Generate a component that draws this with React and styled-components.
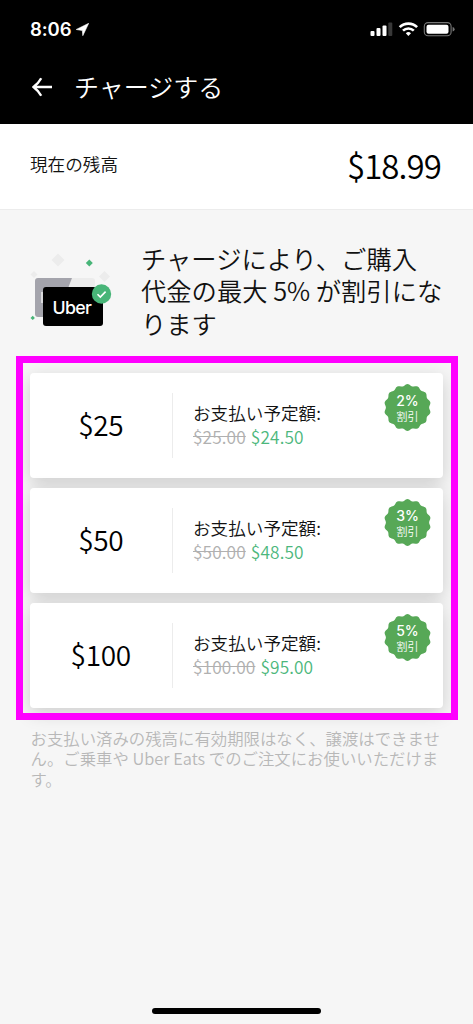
import React from "react";
import styled, { createGlobalStyle } from "styled-components";

const jp = '"Noto Sans CJK JP", sans-serif';

const GlobalStyle = createGlobalStyle`
  * { box-sizing: border-box; }
  body { margin: 0; background: #f6f6f6; font-family: ${jp}; font-weight: 350; color: #111; }
  p, h1, h2 { margin: 0; font-weight: 350; }
`;

const Screen = styled.div`
  position: relative;
  width: 473px;
  height: 1024px;
  overflow: hidden;
  display: flex;
  flex-direction: column;
  background: #f6f6f6;
`;

const Header = styled.header`
  height: 124px;
  flex: none;
  background: #000;
  color: #fff;
`;

const StatusBar = styled.div`
  height: 58px;
  padding: 0 17px 0 30px;
  display: flex;
  align-items: center;
  justify-content: space-between;
`;

const Clock = styled.div`
  display: flex;
  align-items: center;
  gap: 5px;
  font: 600 18.5px/24px Inter, sans-serif;
  letter-spacing: -0.1px;
`;

const StatusIcons = styled.div`
  display: flex;
  align-items: center;
  svg { display: block; }
`;

const NavBar = styled.div`
  height: 57px;
  padding-left: 32px;
  display: flex;
  align-items: center;
  gap: 22px;
`;

const Title = styled.h1`
  padding-bottom: 2px;
  font: 350 25px/36px ${jp};
  white-space: nowrap;
`;

const BalanceRow = styled.section`
  height: 86px;
  flex: none;
  padding: 0 32px 4px 30px;
  display: flex;
  align-items: center;
  justify-content: space-between;
  background: #fff;
  border-bottom: 1px solid #ececec;
`;

const BalanceLabel = styled.span`
  padding-bottom: 1px;
  font: 350 17.6px/24px ${jp};
`;

const Balance = styled.span`
  font: 350 33px/40px ${jp};
  letter-spacing: -0.9px;
  color: #000;
`;

const Hero = styled.section`
  height: 146px;
  flex: none;
  padding: 32px 0 0 24px;
  display: flex;
`;

const HeroArt = styled.svg`
  width: 117px;
  height: 100px;
  flex: none;
`;

const HeroText = styled.h2`
  font: 350 25.3px/32.4px ${jp};
  white-space: nowrap;
`;

const Line = styled.span`
  display: block;
`;

const Offers = styled.section`
  position: relative;
  height: 364px;
  flex: none;
  margin: 0 15.5px 0 16px;
  padding: 16.5px 14.5px 0 14px;
  display: flex;
  flex-direction: column;
  gap: 10.2px;
  &::after {
    content: "";
    position: absolute;
    inset: 0;
    border: 7px solid #ff00ff;
    pointer-events: none;
  }
`;

const Card = styled.article`
  height: 105px;
  flex: none;
  display: flex;
  align-items: center;
  background: #fff;
  border-radius: 4px;
  box-shadow: 0 5px 18px rgba(0, 0, 0, 0.17);
`;

const Amount = styled.div`
  width: 142.5px;
  height: 65px;
  flex: none;
  padding-bottom: 2px;
  display: flex;
  align-items: center;
  justify-content: center;
  border-right: 1px solid #ececec;
  font-size: 28px;
  letter-spacing: -0.3px;
  color: #000;
`;

const Payment = styled.div`
  flex: 1;
  padding: 0 0 1px 20.5px;
  white-space: nowrap;
`;

const PaymentLabel = styled.p`
  font: 350 17.6px/24px ${jp};
`;

const Prices = styled.p`
  display: flex;
  gap: 5px;
  font: 350 17.3px/23px ${jp};
  letter-spacing: 0.12px;
  color: #4cb77c;
`;

const OldPrice = styled.s`
  color: #b0b0b0;
`;

const Badge = styled.div`
  position: relative;
  align-self: flex-start;
  width: 48px;
  height: 48px;
  margin: 11px 11.5px 0 0;
  display: flex;
  flex-direction: column;
  align-items: center;
  justify-content: center;
  color: #fff;
`;

const BadgeShape = styled.svg`
  position: absolute;
  inset: 0;
`;

const BadgeRate = styled.span`
  position: relative;
  font: 500 14px/16px Inter, sans-serif;
`;

const BadgeText = styled.span`
  position: relative;
  font: 350 11px/14px ${jp};
`;

const Footnote = styled.p`
  padding: 8px 0 0 30.5px;
  font: 350 16.4px/20.4px ${jp};
  color: #b8b8b8;
  white-space: nowrap;
`;

const HomeIndicator = styled.div`
  width: 169px;
  height: 6.5px;
  margin: auto auto 10px 152px;
  border-radius: 4px;
  background: #000;
`;

const scallop = Array.from({ length: 169 }, (_, i) => {
  const a = (i / 168) * Math.PI * 2;
  const r = 22.5 + 0.9 * Math.cos(14 * a);
  return `${i ? "L" : "M"}${(23.5 + r * Math.sin(a)).toFixed(2)} ${(23.5 - r * Math.cos(a)).toFixed(2)}`;
}).join("") + "Z";

const offers = [
  { amount: "$25", was: "$25.00", now: "$24.50", rate: "2%" },
  { amount: "$50", was: "$50.00", now: "$48.50", rate: "3%" },
  { amount: "$100", was: "$100.00", now: "$95.00", rate: "5%" },
];

function CardsArt() {
  return (
    <HeroArt viewBox="0 0 117 100">
      <g fill="#ececec">
        <path d="M34 11.500l6.500 6.500-6.500 6.500-6.500-6.500z" />
        <path d="M10 29l3.500 3.500-3.500 3.500-3.500-3.500z" />
        <path d="M80.500 29l5.500 5.500-5.500 5.500-5.500-5.500z" />
        <rect x="12" y="36" width="59" height="39" rx="3" />
      </g>
      <path d="M14 36h34L33 75H14q-3 0-3-3V39q0-3 3-3z" fill="#a4a4ac" />
      <rect x="17" y="50" width="3" height="11" fill="#dadadd" />
      <path d="M65.300 17.500l3.500 3.500-3.500 3.500-3.500-3.500z" fill="#48b578" />
      <path d="M8.700 73.700l2.200 2.200-2.200 2.200-2.200-2.200z" fill="#48b578" />
      <rect x="19" y="45" width="60" height="39" rx="3" />
      <text x="28.500" y="71.500" fill="#fff" fontFamily="Inter" fontSize="17.800" fontWeight="500" textLength="39.500">Uber</text>
      <circle cx="77.500" cy="52" r="9.700" fill="#48b578" />
      <path d="M73.500 52.300l2.800 2.800 5.300-5.500" fill="none" stroke="#fff" strokeWidth="1.600" />
    </HeroArt>
  );
}

export default function App() {
  return (
    <Screen>
      <GlobalStyle />
      <Header>
        <StatusBar>
          <Clock>
            8:06
            <svg width="13" height="13" viewBox="0 0 13 13" fill="#fff">
              <path d="M12.700.300L6.800 12.700 6.300 7.500.200 6.500z" stroke="#fff" strokeWidth=".6" strokeLinejoin="round" />
            </svg>
          </Clock>
          <StatusIcons>
            <svg width="86" height="18" viewBox="0 0 86 18">
              <g fill="#fff">
                <rect x="0.500" y="11" width="4" height="5" rx="1" />
                <rect x="6.500" y="8" width="4" height="8" rx="1" />
                <rect x="12.500" y="5.500" width="4" height="10.500" rx="1" />
                <rect x="18.300" y="2.500" width="4" height="13.500" rx="1" opacity=".22" />
              </g>
              <g fill="none" stroke="#fff" strokeWidth="2.600">
                <path d="M29.700 7.200a12.300 12.300 0 0 1 17.400 0" />
                <path d="M33 10.700a7.600 7.600 0 0 1 10.800 0" />
              </g>
              <path d="M38.400 16l-2.600-2.700a3.700 3.700 0 0 1 5.200 0z" fill="#fff" />
              <rect x="54.300" y="2.600" width="26.800" height="13.200" rx="3.800" fill="none" stroke="#777" strokeWidth="1.100" />
              <rect x="56.500" y="4.700" width="22" height="9" rx="2" fill="#fff" />
              <path d="M82.600 7q2 .500 2 2.200t-2 2.200z" fill="#777" />
            </svg>
          </StatusIcons>
        </StatusBar>
        <NavBar>
          <svg width="20" height="20" viewBox="0 0 20 20" fill="none" stroke="#fff" strokeWidth="2.400">
            <path d="M20 10H2M9.200 1.200Q6.500 6.200 1.500 10Q6.500 13.800 9.200 18.800" />
          </svg>
          <Title>チャージする</Title>
        </NavBar>
      </Header>
      <BalanceRow>
        <BalanceLabel>現在の残高</BalanceLabel>
        <Balance>$18.99</Balance>
      </BalanceRow>
      <Hero>
        <CardsArt />
        <HeroText>
          <Line>チャージにより、ご購入</Line>
          <Line>代金の最大 5% が割引にな</Line>
          <Line>ります</Line>
        </HeroText>
      </Hero>
      <Offers>
        {offers.map((o) => (
          <Card key={o.amount}>
            <Amount>{o.amount}</Amount>
            <Payment>
              <PaymentLabel>お支払い予定額:</PaymentLabel>
              <Prices>
                <OldPrice>{o.was}</OldPrice>
                <span>{o.now}</span>
              </Prices>
            </Payment>
            <Badge>
              <BadgeShape viewBox="0 0 48 48">
                <path d={scallop} fill="#57a857" />
              </BadgeShape>
              <BadgeRate>{o.rate}</BadgeRate>
              <BadgeText>割引</BadgeText>
            </Badge>
          </Card>
        ))}
      </Offers>
      <Footnote>
        <Line>お支払い済みの残高に有効期限はなく、譲渡はできませ</Line>
        <Line>ん。ご乗車や Uber Eats でのご注文にお使いいただけま</Line>
        <Line>す。</Line>
      </Footnote>
      <HomeIndicator />
    </Screen>
  );
}
